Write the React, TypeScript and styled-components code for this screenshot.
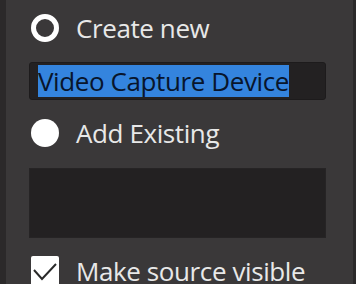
import React from "react";
import styled, { createGlobalStyle } from "styled-components";

const Global = createGlobalStyle`
  html, body { margin: 0; padding: 0; background: #3a3839; }
  body { width: 356px; height: 284px; overflow: hidden; }
`;

const Frame = styled.div`
  display: flex;
  width: 356px;
  height: 284px;
  background: #3a3839;
  font-family: "Open Sans", "Noto Sans", sans-serif;
  color: #e8e8e8;
  overflow: hidden;
`;

const EdgeLeft = styled.div`
  width: 6px;
  flex: none;
  background: #2b292a;
`;

const EdgeRight = styled.div`
  width: 3px;
  flex: none;
  background: #2b292a;
`;

const Panel = styled.div`
  flex: 1;
  display: flex;
  flex-direction: column;
  padding-left: 23px;
  padding-right: 27px;
`;

const Row = styled.div<{ $h: number }>`
  display: flex;
  align-items: center;
  gap: 17px;
  height: ${(p) => p.$h}px;
  padding-left: 2px;
  flex: none;
`;

const Label = styled.span`
  font-size: 26px;
  letter-spacing: -0.4px;
  line-height: 1;
  white-space: nowrap;
`;

const Radio = styled.span<{ $on: boolean }>`
  width: 28px;
  height: 28px;
  box-sizing: border-box;
  border-radius: 50%;
  flex: none;
  background: ${(p) => (p.$on ? "#3a3839" : "#ffffff")};
  border: ${(p) => (p.$on ? "5px solid #ffffff" : "none")};
`;

const Check = styled.span`
  width: 28px;
  height: 30px;
  border-radius: 2px;
  background: #ffffff;
  flex: none;
  display: block;
`;

const Input = styled.div`
  margin-top: 6px;
  height: 38px;
  box-sizing: border-box;
  background: #232122;
  border: 1px solid #1d1b1c;
  border-radius: 3px;
  display: flex;
  align-items: center;
  padding-left: 8px;
  flex: none;
`;

const Selected = styled.span`
  background: #3484de;
  color: #08152c;
  font-size: 26px;
  letter-spacing: -0.4px;
  line-height: 32px;
  height: 32px;
  white-space: nowrap;
`;

const ListBox = styled.div`
  height: 70px;
  margin-top: 2px;
  background: #232122;
  border: 1px solid #262425;
  box-sizing: border-box;
  flex: none;
`;

export default function App() {
  return (
    <>
      <Global />
      <Frame>
        <EdgeLeft />
        <Panel>
          <Row $h={56}>
            <Radio $on={true} />
            <Label>Create new</Label>
          </Row>
          <Input>
            <Selected>Video Capture Device</Selected>
          </Input>
          <Row $h={66}>
            <Radio $on={false} />
            <Label>Add Existing</Label>
          </Row>
          <ListBox />
          <Row $h={66}>
            <Check>
              <svg width="28" height="30" viewBox="0 0 28 30">
                <path d="M3 14 L11 23 L25 8" fill="none" stroke="#2a2a2a" strokeWidth="2" />
              </svg>
            </Check>
            <Label>Make source visible</Label>
          </Row>
        </Panel>
        <EdgeRight />
      </Frame>
    </>
  );
}
